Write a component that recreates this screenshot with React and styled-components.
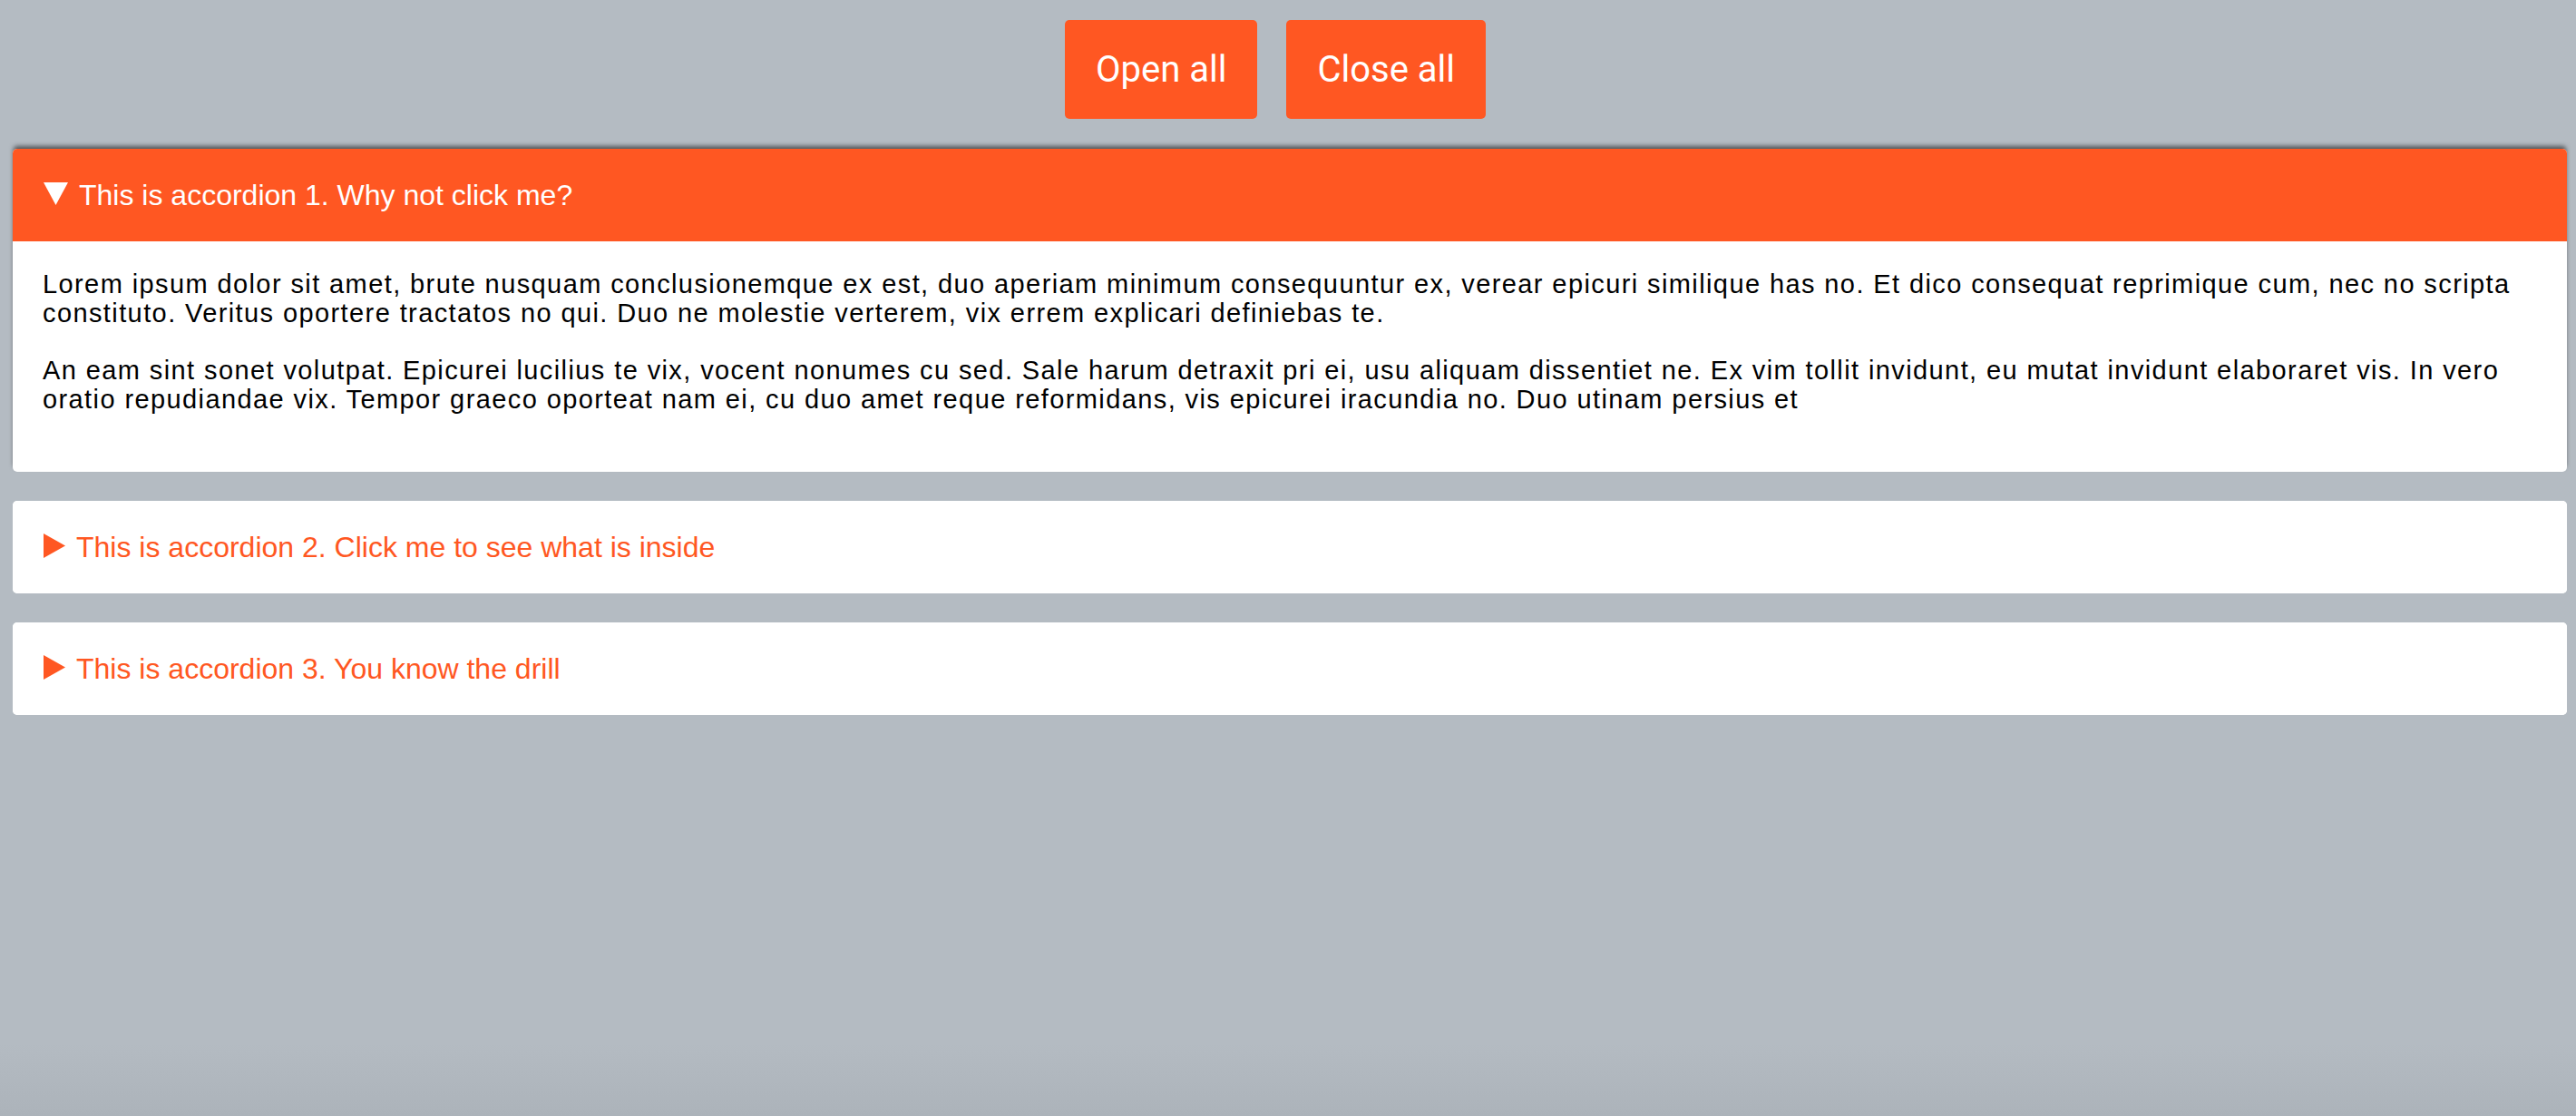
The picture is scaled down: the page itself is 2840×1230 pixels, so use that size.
import React, { useState } from "react";
import styled, { createGlobalStyle } from "styled-components";

const GlobalStyle = createGlobalStyle`
  html, body {
    margin: 0;
    padding: 0;
    min-height: 100vh;
  }
  body {
    background: linear-gradient(
      to bottom,
      #b4bbc2 0,
      #b4bbc2 calc(100% - 80px),
      #acb3ba 100%
    );
    font-family: "Liberation Sans", Arial, sans-serif;
  }
`;

const Page = styled.div`
  padding: 22px 10px 40px 14px;
`;

const Toolbar = styled.div`
  display: flex;
  justify-content: center;
  margin-bottom: 33px;
`;

const ToolButton = styled.button`
  height: 109px;
  padding: 0 34px;
  margin-right: 32px;
  background: #ff5722;
  border: none;
  border-radius: 5px;
  color: #ffffff;
  font-family: Roboto, "Liberation Sans", sans-serif;
  font-size: 40px;
  font-weight: 400;
  cursor: pointer;
`;

const List = styled.div`
  display: flex;
  flex-direction: column;
  gap: 32px;
`;

const Card = styled.div`
  background: #ffffff;
  border-radius: 5px;
  box-shadow: ${(p) =>
    p.$open ? "0 -4px 5px -1px rgba(0, 0, 0, 0.55)" : "none"};
`;

const Header = styled.div`
  display: flex;
  align-items: center;
  height: 102px;
  padding-left: 34px;
  background: ${(p) => (p.$open ? "#ff5722" : "#ffffff")};
  color: ${(p) => (p.$open ? "#ffffff" : "#ff5722")};
  border-radius: ${(p) => (p.$open ? "5px 5px 0 0" : "5px")};
  font-size: 32px;
  cursor: pointer;
  user-select: none;
`;

const Marker = styled.svg`
  flex: none;
  margin-right: 12px;
  margin-bottom: 4px;
  fill: currentColor;
`;

const Body = styled.div`
  padding: 31px 33px 33px;
  color: #000000;
  font-size: 29px;
  line-height: 32px;
  letter-spacing: 1.4px;

  p {
    margin: 0 0 31px;
  }
`;

const items = [
  {
    title: "This is accordion 1. Why not click me?",
    paragraphs: [
      "Lorem ipsum dolor sit amet, brute nusquam conclusionemque ex est, duo aperiam minimum consequuntur ex, verear epicuri similique has no. Et dico consequat reprimique cum, nec no scripta constituto. Veritus oportere tractatos no qui. Duo ne molestie verterem, vix errem explicari definiebas te.",
      "An eam sint sonet volutpat. Epicurei lucilius te vix, vocent nonumes cu sed. Sale harum detraxit pri ei, usu aliquam dissentiet ne. Ex vim tollit invidunt, eu mutat invidunt elaboraret vis. In vero oratio repudiandae vix. Tempor graeco oporteat nam ei, cu duo amet reque reformidans, vis epicurei iracundia no. Duo utinam persius et",
    ],
  },
  {
    title: "This is accordion 2. Click me to see what is inside",
    paragraphs: [
      "Lorem ipsum dolor sit amet, brute nusquam conclusionemque ex est, duo aperiam minimum consequuntur ex, verear epicuri similique has no.",
    ],
  },
  {
    title: "This is accordion 3. You know the drill",
    paragraphs: [
      "Et dico consequat reprimique cum, nec no scripta constituto. Veritus oportere tractatos no qui.",
    ],
  },
];

function Arrow({ open }) {
  if (open) {
    return (
      <Marker width="27" height="25" viewBox="0 0 27 25">
        <polygon points="0,0 27,0 13.5,25" />
      </Marker>
    );
  }
  return (
    <Marker width="24" height="27" viewBox="0 0 24 27">
      <polygon points="0,0 24,13.5 0,27" />
    </Marker>
  );
}

export default function App() {
  const [open, setOpen] = useState([true, false, false]);

  const toggle = (i) =>
    setOpen((prev) => prev.map((v, j) => (j === i ? !v : v)));

  return (
    <Page>
      <GlobalStyle />
      <Toolbar>
        <ToolButton onClick={() => setOpen(items.map(() => true))}>
          Open all
        </ToolButton>
        <ToolButton onClick={() => setOpen(items.map(() => false))}>
          Close all
        </ToolButton>
      </Toolbar>
      <List>
        {items.map((item, i) => (
          <Card key={i} $open={open[i]}>
            <Header $open={open[i]} onClick={() => toggle(i)}>
              <Arrow open={open[i]} />
              {item.title}
            </Header>
            {open[i] && (
              <Body>
                {item.paragraphs.map((text, k) => (
                  <p key={k}>{text}</p>
                ))}
              </Body>
            )}
          </Card>
        ))}
      </List>
    </Page>
  );
}
